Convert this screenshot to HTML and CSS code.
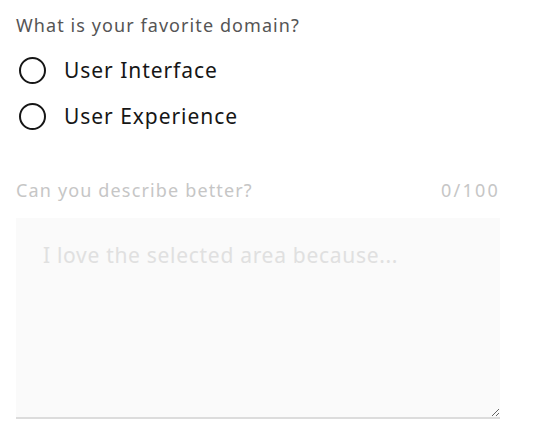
FILE: index.html
```html
<!DOCTYPE html>
<html lang="en">
<head>
<meta charset="utf-8">
<title>Form</title>
<link rel="stylesheet" href="styles.css">
</head>
<body>
<form class="form">
  <fieldset class="group">
    <legend class="legend">What is your favorite domain?</legend>
    <label class="radio">
      <input class="radio-input" type="radio" name="domain" value="ui">
      <span class="radio-circle"></span>
      <span class="radio-text">User Interface</span>
    </label>
    <label class="radio">
      <input class="radio-input" type="radio" name="domain" value="ux">
      <span class="radio-circle"></span>
      <span class="radio-text">User Experience</span>
    </label>
  </fieldset>
  <div class="field">
    <div class="field-head">
      <label class="field-label" for="why">Can you describe better?</label>
      <span class="counter">0/100</span>
    </div>
    <textarea id="why" class="textarea" disabled placeholder="I love the selected area because..."></textarea>
  </div>
</form>
</body>
</html>
```
FILE: styles.css
```css
* { box-sizing: border-box; }
html, body { margin: 0; background: #ffffff; }
body {
  font-family: "Noto Sans", "Open Sans", sans-serif;
  padding: 13px 0 0 16px;
}
.form { width: 484px; }
.group { border: 0; margin: 0; padding: 0; min-width: 0; }
.legend {
  padding: 0;
  font-size: 18px;
  line-height: 24px;
  letter-spacing: 1.08px;
  color: #555555;
  margin-bottom: 20px;
}
.radio {
  display: flex;
  align-items: center;
  height: 27px;
  margin-bottom: 19px;
  cursor: pointer;
}
.radio-input { position: absolute; opacity: 0; width: 0; height: 0; margin: 0; }
.radio-circle {
  width: 27px;
  height: 27px;
  margin-left: 3px;
  margin-right: 18px;
  border: 2px solid #161616;
  border-radius: 50%;
  flex: none;
}
.radio-text {
  font-size: 21px;
  line-height: 27px;
  letter-spacing: 0.95px;
  color: #161616;
}
.field { margin-top: 29px; }
.field-head {
  display: flex;
  justify-content: space-between;
  align-items: center;
  height: 24px;
  margin-bottom: 16px;
}
.field-label, .counter {
  font-size: 18px;
  line-height: 24px;
  letter-spacing: 1.15px;
  color: #c6c6c6;
}
.counter { letter-spacing: 2.2px; margin-right: 0; }
.textarea {
  display: block;
  width: 484px;
  height: 201px;
  margin: 0;
  padding: 22px 24px 16px 27px;
  border: 0;
  border-bottom: 2px solid #dcdcdc;
  background: #fafafa;
  font-family: inherit;
  font-size: 21px;
  line-height: 30px;
  letter-spacing: 0.7px;
  color: #c6c6c6;
  resize: vertical;
  outline: none;
}
.textarea::placeholder { color: #e0e0e0; opacity: 1; }
```
